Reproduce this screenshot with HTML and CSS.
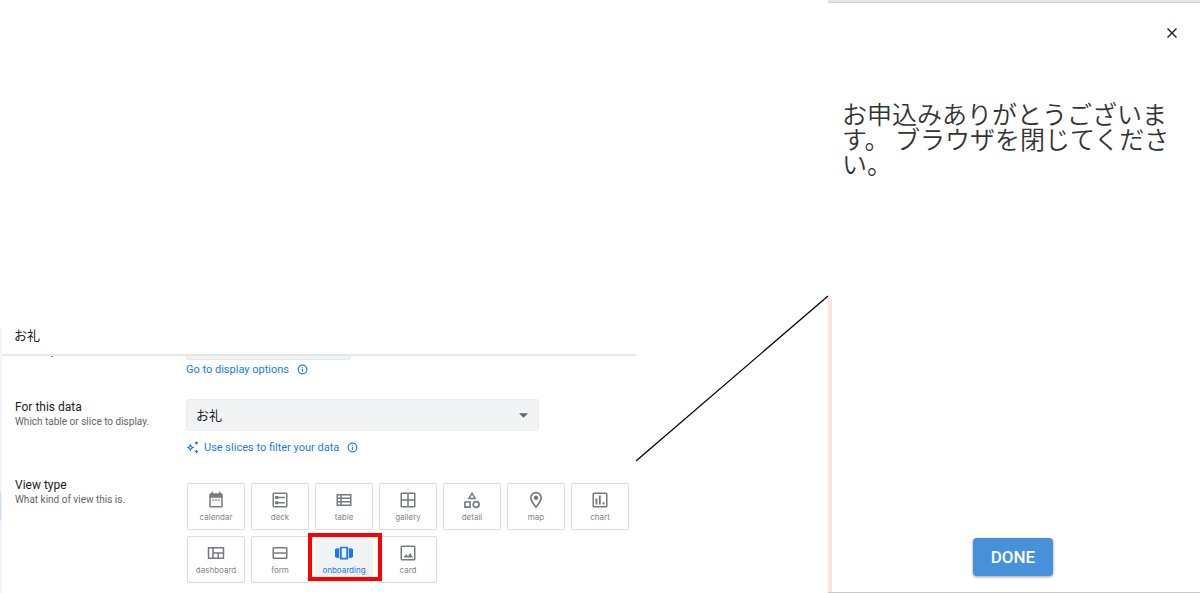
FILE: index.html
```html
<!DOCTYPE html>
<html lang="ja">
<head>
    <meta charset="UTF-8">
    <meta name="viewport" content="width=device-width, initial-scale=1.0">
    <title>お礼</title>
    <link rel="stylesheet" href="styles.css">
</head>
<body>

<main class="page">
    <section class="editor">
        <h2 class="editor-title">お礼</h2>

        <form class="settings">
            <div class="setting">
                <div class="setting-label cut"></div>
                <div class="setting-control">
                    <div class="field-end"></div>
                    <div class="hint">
                        <a href="#">Go to display options</a>
                        <svg class="info" viewBox="0 0 24 24"><circle cx="12" cy="12" r="9.5"/><path d="M12 11v6M12 7v2"/></svg>
                    </div>
                </div>
            </div>

            <div class="setting">
                <div class="setting-label">
                    <label for="source">For this data</label>
                    <p>Which table or slice to display.</p>
                </div>
                <div class="setting-control">
                    <div class="select-box">
                        <select id="source">
                            <option>お礼</option>
                        </select>
                        <svg class="arrow" viewBox="0 0 10 5"><path d="M0 0h10L5 5z"/></svg>
                    </div>
                    <div class="hint slices">
                        <svg class="spark" viewBox="0 0 14 14"><path fill-rule="evenodd" d="M4.500 3.500l1.300 2.700L8.500 7.500 5.800 8.800 4.500 11.500 3.200 8.800.5 7.500l2.700-1.300zM4.500 6L4 7l-1 .5 1 .5.5 1 .5-1 1-.5L5 7z"/><path d="M10.500 1l.8 1.300 1.300.7-1.300.7-.8 1.300-.8-1.300L8.400 3l1.300-.7zM10.500 9.500l.8 1.300 1.300.7-1.300.7-.8 1.300-.8-1.300-1.300-.7 1.300-.7z"/></svg>
                        <a href="#">Use slices to filter your data</a>
                        <svg class="info" viewBox="0 0 24 24"><circle cx="12" cy="12" r="9.5"/><path d="M12 11v6M12 7v2"/></svg>
                    </div>
                </div>
            </div>

            <div class="setting">
                <div class="setting-label">
                    <h3>View type</h3>
                    <p>What kind of view this is.</p>
                </div>
                <div class="setting-control types">
                    <label class="type">
                        <input type="radio" name="type">
                        <svg viewBox="0 0 24 24"><path fill-rule="evenodd" d="M19 3h-1V1h-2v2H8V1H6v2H5a2 2 0 0 0-2 2v15a2 2 0 0 0 2 2h14a2 2 0 0 0 2-2V5a2 2 0 0 0-2-2zM5 9h14v11H5z"/><path d="M7 11h2v2H7zM11 11h2v2h-2zM15 11h2v2h-2z"/></svg>
                        <span>calendar</span>
                    </label>
                    <label class="type">
                        <input type="radio" name="type">
                        <svg viewBox="0 0 24 24"><path fill-rule="evenodd" d="M4 2h16a2 2 0 0 1 2 2v16a2 2 0 0 1-2 2H4a2 2 0 0 1-2-2V4a2 2 0 0 1 2-2zm0 2v16h16V4z"/><path d="M5.500 6.500h4v4h-4zM5.500 13.500h4v4h-4zM9 7.500h9.500v2H9zM9 14.500h9.500v2H9z"/></svg>
                        <span>deck</span>
                    </label>
                    <label class="type">
                        <input type="radio" name="type">
                        <svg viewBox="0 0 24 24"><path fill-rule="evenodd" d="M2 4h20v16H2zm2 2v2.700h3V6zm5 0v2.700h11V6zM4 10.700v2.600h3v-2.600zm5 0v2.600h11v-2.600zM4 15.300V18h3v-2.700zm5 0V18h11v-2.700z"/></svg>
                        <span>table</span>
                    </label>
                    <label class="type">
                        <input type="radio" name="type">
                        <svg viewBox="0 0 24 24"><path fill-rule="evenodd" d="M3 2h18a1 1 0 0 1 1 1v18a1 1 0 0 1-1 1H3a1 1 0 0 1-1-1V3a1 1 0 0 1 1-1zm1 2v7h7V4zm9 0v7h7V4zM4 13v7h7v-7zm9 0v7h7v-7z"/></svg>
                        <span>gallery</span>
                    </label>
                    <label class="type">
                        <input type="radio" name="type">
                        <svg viewBox="0 0 24 24"><path fill-rule="evenodd" d="M12 1l-6 10h12zm0 4l2.400 4H9.600zM17.500 13a5 5 0 1 0 0 10 5 5 0 0 0 0-10zm0 2.200a2.800 2.800 0 1 1 0 5.600 2.800 2.800 0 0 1 0-5.600zM1.500 22.500h9v-9h-9zm2.200-6.800h4.600v4.600H3.700z"/></svg>
                        <span>detail</span>
                    </label>
                    <label class="type">
                        <input type="radio" name="type">
                        <svg viewBox="0 0 24 24"><path fill-rule="evenodd" d="M12 1a8 8 0 0 0-8 8c0 5.500 8 14 8 14s8-8.500 8-14a8 8 0 0 0-8-8zM6.200 9a5.800 5.800 0 0 1 11.600 0c0 3.200-3.400 7.800-5.800 10.700C9.600 16.800 6.200 12.200 6.200 9z"/><circle cx="12" cy="9" r="3"/></svg>
                        <span>map</span>
                    </label>
                    <label class="type">
                        <input type="radio" name="type">
                        <svg viewBox="0 0 24 24"><path fill-rule="evenodd" d="M4 2h16a2 2 0 0 1 2 2v16a2 2 0 0 1-2 2H4a2 2 0 0 1-2-2V4a2 2 0 0 1 2-2zm0 2v16h16V4z"/><path d="M6 10h2.500v8H6zM10.500 6H13v12h-2.500zM15.500 15H18v3h-2.500z"/></svg>
                        <span>chart</span>
                    </label>
                    <label class="type">
                        <input type="radio" name="type">
                        <svg viewBox="0 0 24 24"><path fill-rule="evenodd" d="M1 4h22v16H1zm2 2v12h4V6zm6 0v5h12V6zm0 7v5h5v-5zm7 0v5h5v-5z"/></svg>
                        <span>dashboard</span>
                    </label>
                    <label class="type">
                        <input type="radio" name="type">
                        <svg viewBox="0 0 24 24"><path fill-rule="evenodd" d="M4 4h16a2 2 0 0 1 2 2v12a2 2 0 0 1-2 2H4a2 2 0 0 1-2-2V6a2 2 0 0 1 2-2zm0 2v5h16V6zm0 7v5h16v-5z"/></svg>
                        <span>form</span>
                    </label>
                    <label class="type selected">
                        <input type="radio" name="type" checked>
                        <svg viewBox="0 0 24 24"><path fill-rule="evenodd" d="M6.500 3.500h11v17h-11zm2.500 2.300v12.400h6V5.800z"/><path d="M2 5.500h3.500v13H2zM18.500 5.500H22v13h-3.500zM0 6.500h2v11H0zM22 6.500h2v11h-2z"/></svg>
                        <span>onboarding</span>
                    </label>
                    <label class="type">
                        <input type="radio" name="type">
                        <svg viewBox="0 0 24 24"><path fill-rule="evenodd" d="M4 2h16a2 2 0 0 1 2 2v16a2 2 0 0 1-2 2H4a2 2 0 0 1-2-2V4a2 2 0 0 1 2-2zm0 2v16h16V4z"/><path d="M6 18l3.500-4.500 2.500 2.700 3.200-4.200L18.500 18z"/></svg>
                        <span>card</span>
                    </label>
                </div>
            </div>
        </form>
    </section>

    <svg class="connector" viewBox="0 0 192 165" preserveAspectRatio="none"><path d="M0 165L192 0"/></svg>

    <section class="preview">
        <button class="close" aria-label="Close">
            <svg viewBox="0 0 10 10"><path d="M.5.5l9 9M9.500.5l-9 9"/></svg>
        </button>
        <p class="message">お申込みありがとうございます。 ブラウザを閉じてください。</p>
        <button class="done">DONE</button>
    </section>
</main>

</body>
</html>
```
FILE: styles.css
```css
*, *::before, *::after {
    box-sizing: border-box;
}

body {
    margin: 0;
    background-color: #fff;
    font-family: Roboto, "Noto Sans CJK JP", sans-serif;
    color: #202124;
}

h2, h3, p {
    margin: 0;
}

.page {
    display: grid;
    grid-template-columns: 53fr 16fr 31fr;
    min-height: 100vh;
}

/* editor panel */
.editor {
    position: relative;
    align-self: end;
    border-left: 2px solid #f1f3f6;
    padding-bottom: 10px;
}

.editor::before {
    content: "";
    position: absolute;
    left: -2px;
    bottom: 73px;
    width: 1px;
    height: 28px;
    background-color: #c9dcfb;
}

.editor-title {
    height: 28px;
    padding-left: 12px;
    border-bottom: 2px solid #e6e7e8;
    font-size: 13px;
    line-height: 16px;
    font-weight: 400;
}

.settings {
    padding-left: 13px;
}

.setting {
    display: grid;
    grid-template-columns: 171px 1fr;
}

.setting-label label,
.setting-label h3 {
    display: block;
    font-size: 12px;
    line-height: 16px;
    font-weight: 400;
}

.setting-label p {
    font-size: 10px;
    line-height: 14px;
    color: #5f6368;
}

.cut::before {
    content: "";
    display: block;
    width: 2px;
    height: 1px;
    margin-left: 36px;
    background-color: #80868b;
}

.field-end {
    width: 165px;
    height: 4px;
    background-color: #f1f3f4;
    border: 1px solid #e3e5e7;
    border-top: none;
    border-radius: 0 0 3px 3px;
}

.hint {
    display: flex;
    align-items: center;
    gap: 8px;
    height: 18px;
    margin-bottom: 21px;
    font-size: 11px;
}

.hint a {
    color: #1a78ee;
    text-decoration: none;
}

.slices {
    gap: 4px;
    margin: 7px 0 21px;
}

.slices .info {
    margin-left: 4px;
}

.info {
    width: 11px;
    height: 11px;
    fill: none;
    stroke: #1a78ee;
    stroke-width: 2.5;
}

.spark {
    width: 14px;
    height: 14px;
    fill: #1a78ee;
}

.select-box {
    position: relative;
    width: 353px;
    max-width: 100%;
}

.select-box select {
    appearance: none;
    display: block;
    width: 100%;
    height: 32px;
    padding: 0 9px;
    border: 1px solid #e8eaed;
    border-radius: 3px;
    background-color: #f1f3f4;
    color: #202124;
    font: 13px Roboto, "Noto Sans CJK JP", sans-serif;
}

.arrow {
    position: absolute;
    right: 11px;
    top: 14px;
    width: 9px;
    height: 5px;
    fill: #5f6368;
}

/* view type tiles */
.types {
    display: flex;
    flex-wrap: wrap;
    gap: 6px;
    padding: 6px 0 0 1px;
}

.type {
    position: relative;
    display: flex;
    flex-direction: column;
    align-items: center;
    gap: 2px;
    width: 58px;
    height: 47px;
    padding-top: 7px;
    border: 1px solid #dadce0;
    border-radius: 2px;
    color: #80868b;
    font-family: Inter, sans-serif;
    font-size: 8px;
    line-height: 12px;
    cursor: pointer;
}

.type input {
    position: absolute;
    opacity: 0;
    margin: 0;
}

.type svg {
    width: 18px;
    height: 18px;
    fill: #757a80;
}

.selected {
    background-color: #f1f3f4;
    border-color: #f1f3f4;
    color: #1a78ee;
}

.selected svg {
    fill: #1a78ee;
}

.selected::after {
    content: "";
    position: absolute;
    left: -8px;
    top: -4px;
    width: 74px;
    height: 48px;
    border: 4px solid #f00;
    z-index: 1;
}

.connector {
    align-self: end;
    width: 100%;
    height: 165px;
    margin-bottom: 132px;
    fill: none;
    stroke: #000;
    stroke-width: 1.3;
    overflow: visible;
}

/* app preview */
.preview {
    position: relative;
    display: flex;
    flex-direction: column;
    padding: 24px 16px 16px 14px;
    border-top: 1px solid #e6e6e6;
    border-bottom: 1px solid #c8c9cb;
    box-shadow: inset 0 1px #e6e6e6, inset 0 2px #cfcfcf;
}

.preview::before {
    content: "";
    position: absolute;
    left: 0;
    top: 50%;
    bottom: 0;
    width: 4px;
    background-color: #fde4de;
}

.close {
    align-self: flex-end;
    display: flex;
    padding: 3px 7px;
    border: none;
    background: none;
    cursor: pointer;
}

.close svg {
    width: 10px;
    height: 10px;
    fill: none;
    stroke: #1f2a44;
    stroke-width: 1.5;
}

.message {
    margin-top: 60px;
    font-family: "Noto Sans CJK JP", sans-serif;
    font-size: 25px;
    line-height: 25px;
    font-weight: 350;
    color: #333;
}

.done {
    align-self: center;
    width: 80px;
    height: 38px;
    margin-top: auto;
    border: none;
    border-radius: 4px;
    background-color: #4791db;
    box-shadow: 0 1px 3px rgba(0, 0, 0, 0.4);
    color: #fff;
    font-family: Roboto, sans-serif;
    font-size: 17px;
    font-weight: 500;
    cursor: pointer;
}
```
